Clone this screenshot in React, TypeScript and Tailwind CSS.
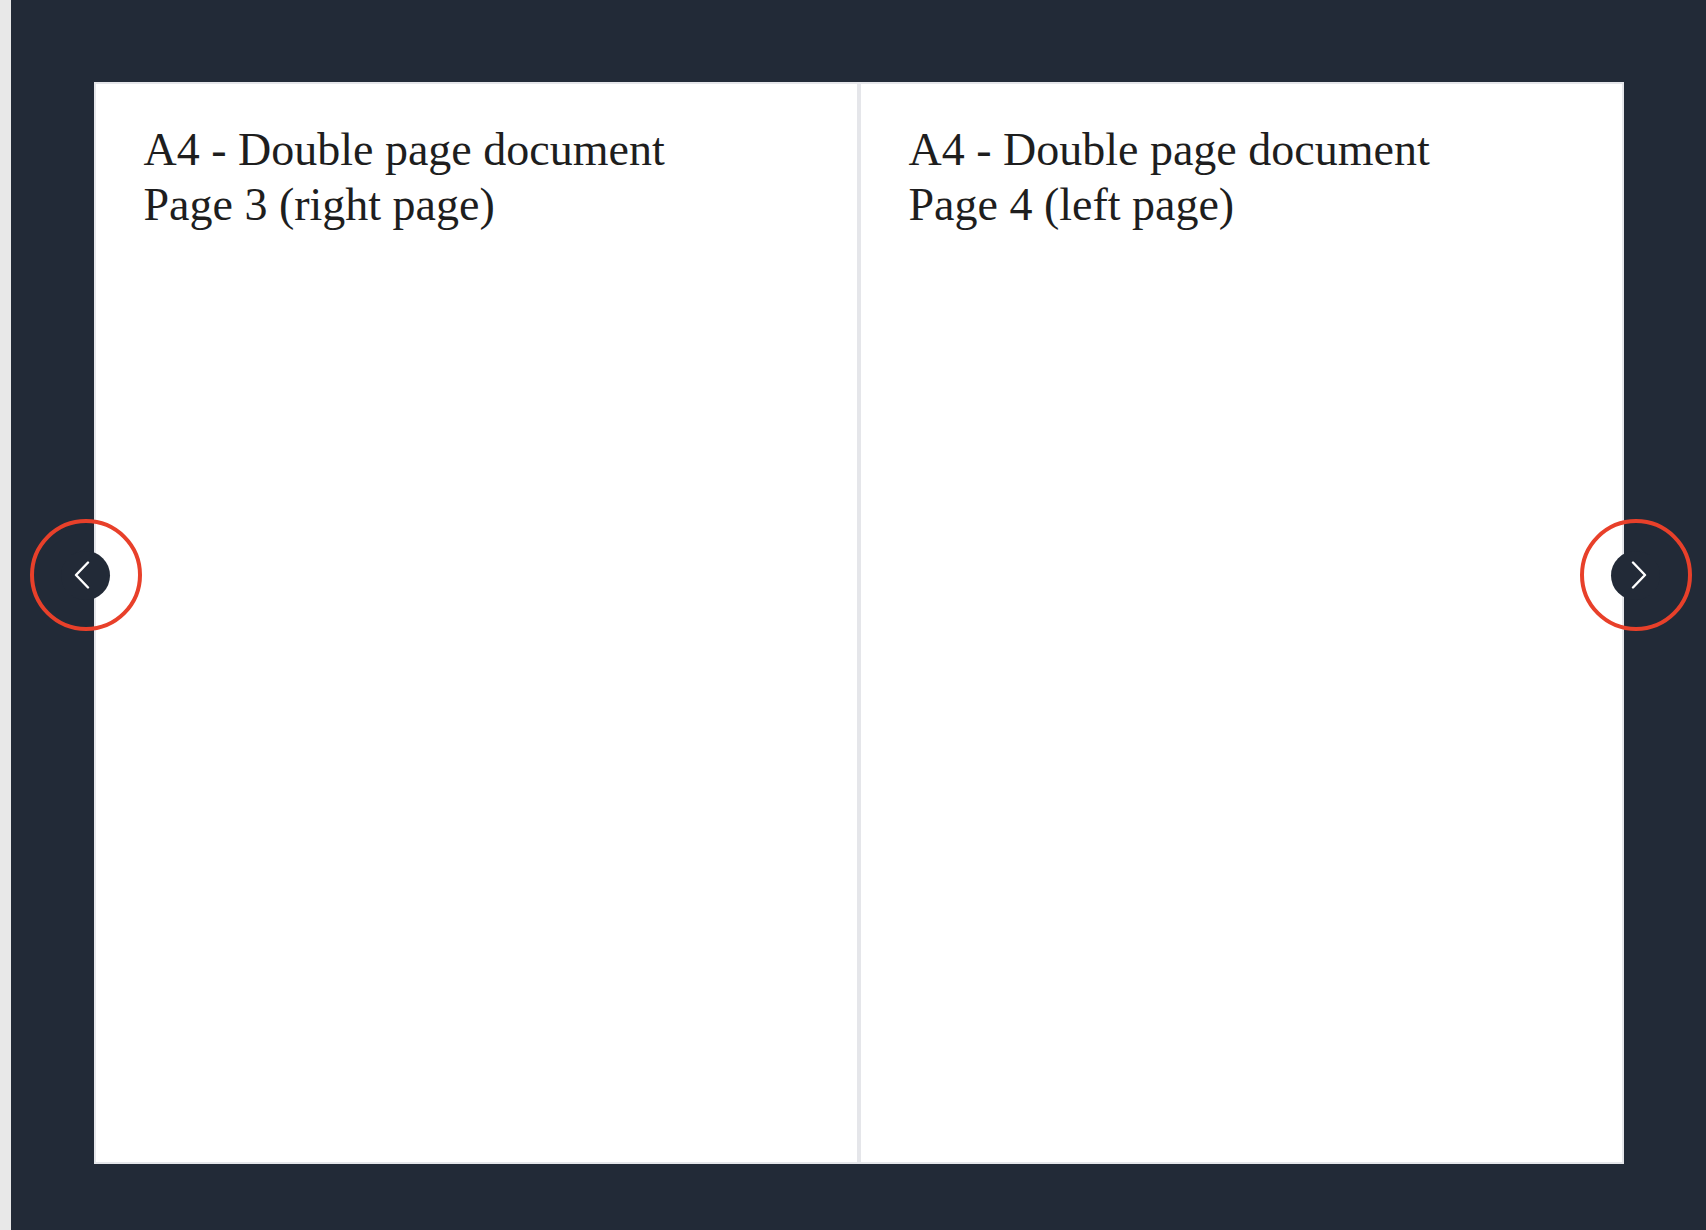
import React from 'react'

type PageProps = {
  title: string
  subtitle: string
}

function Page({ title, subtitle }: PageProps) {
  return (
    <div className="h-[1082px] w-[765px] border-2 border-[#e5e6ea] bg-white pl-[48px] pr-[50px] pt-[38px]">
      <div
        className="text-[46px] leading-[55px] text-[#1e1e1e]"
        style={{ fontFamily: '"Liberation Serif", "DejaVu Serif", serif' }}
      >
        <div>{title}</div>
        <div>{subtitle}</div>
      </div>
    </div>
  )
}

function NavButton({ side }: { side: 'left' | 'right' }) {
  const isLeft = side === 'left'
  return (
    <div
      className={
        'absolute top-[437px] flex h-[112px] w-[112px] items-center justify-center rounded-full border-4 border-[#e8402a] ' +
        (isLeft ? 'left-[-64px]' : 'right-[-68px]')
      }
    >
      <button className="flex h-[49px] w-[49px] items-center justify-center rounded-full bg-[#222a37]">
        <svg width="16" height="28" viewBox="0 0 16 28" fill="none" className={isLeft ? 'mr-[8px]' : 'ml-[6px]'}>
          {isLeft ? (
            <polyline points="14,1.5 2,14 14,26.5" stroke="white" strokeWidth="2.4" strokeLinecap="round" strokeLinejoin="round" />
          ) : (
            <polyline points="2,1.5 14,14 2,26.5" stroke="white" strokeWidth="2.4" strokeLinecap="round" strokeLinejoin="round" />
          )}
        </svg>
      </button>
    </div>
  )
}

export default function App() {
  return (
    <div className="flex h-[1230px] w-full overflow-hidden">
      <div className="h-full w-[11px] shrink-0 bg-[#e8e8e8]" />
      <div className="flex flex-1 justify-center bg-[#222a37] pt-[82px]">
        <div className="relative flex h-[1082px]">
          <Page title="A4 - Double page document" subtitle="Page 3 (right page)" />
          <Page title="A4 - Double page document" subtitle="Page 4 (left page)" />
          <NavButton side="left" />
          <NavButton side="right" />
        </div>
      </div>
    </div>
  )
}
